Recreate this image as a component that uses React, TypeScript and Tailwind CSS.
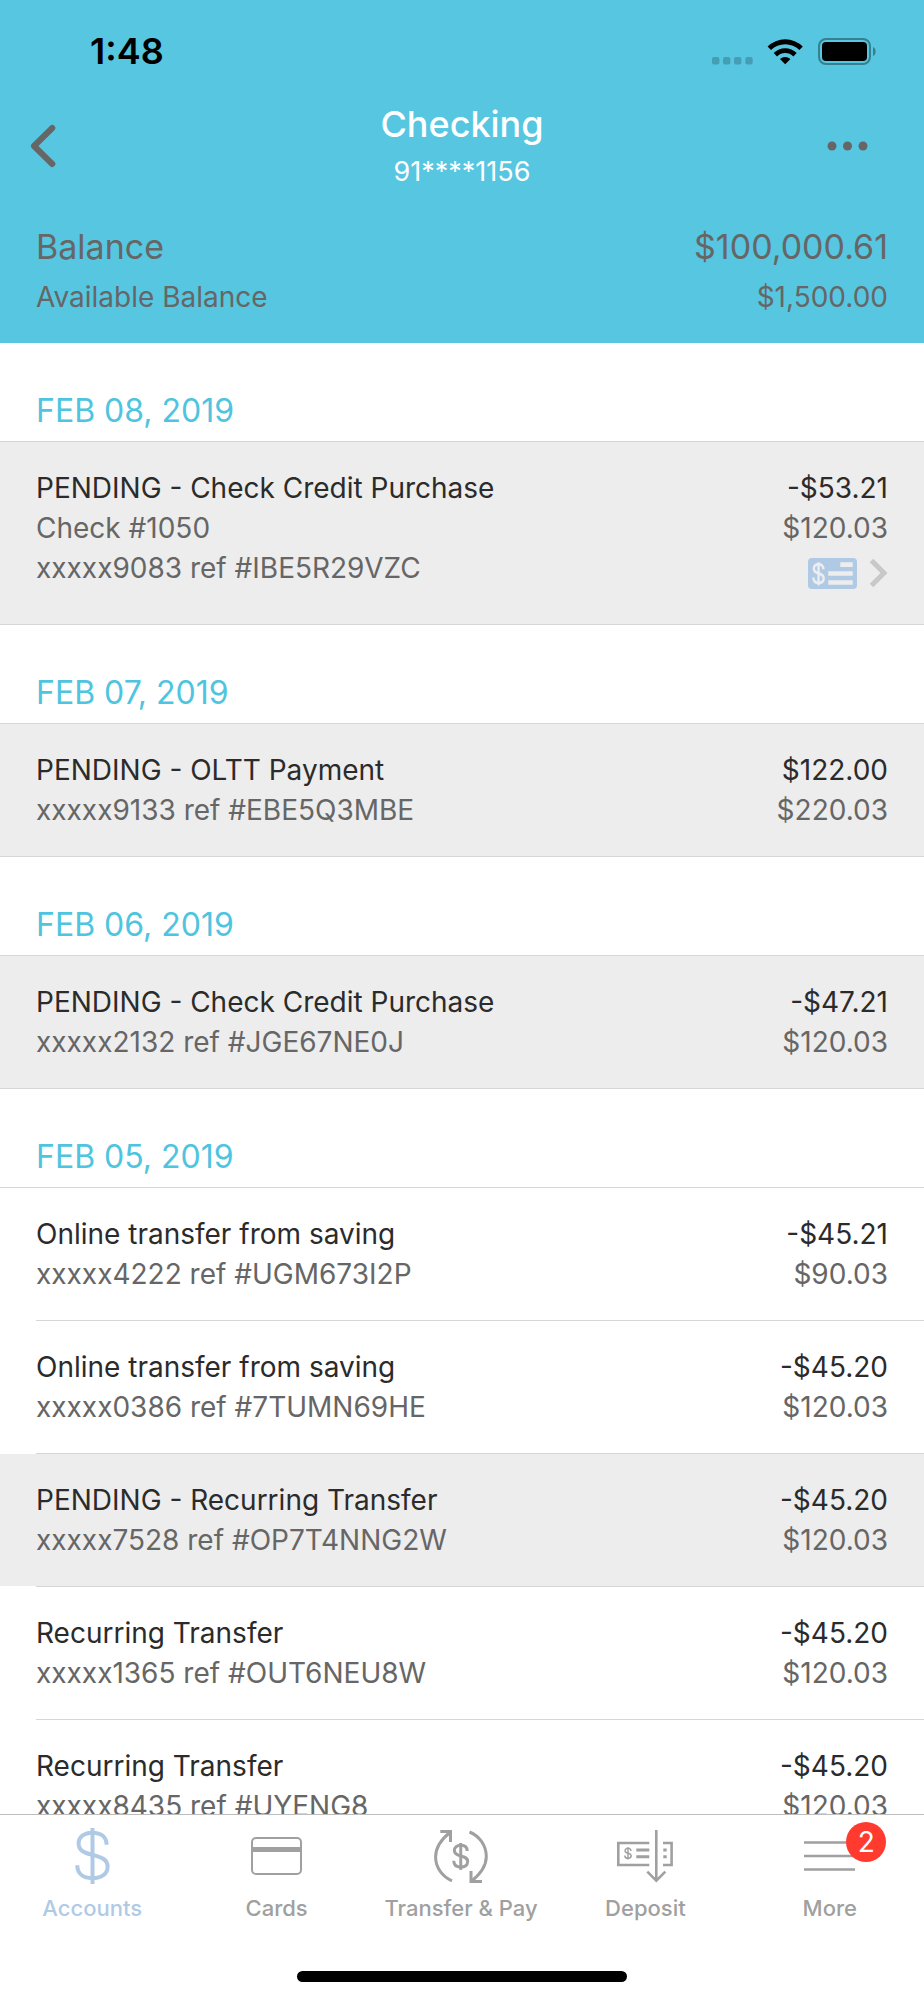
import React from 'react';
import clsx from 'clsx';

type Transaction = {
  title: string;
  details: string[];
  amount: string;
  balance: string;
  pending?: boolean;
  hasCheck?: boolean;
};

type Group = { date: string; items: Transaction[] };

const groups: Group[] = [
  {
    date: 'FEB 08, 2019',
    items: [
      {
        title: 'PENDING - Check Credit Purchase',
        details: ['Check #1050', 'xxxxx9083 ref #IBE5R29VZC'],
        amount: '-$53.21',
        balance: '$120.03',
        pending: true,
        hasCheck: true,
      },
    ],
  },
  {
    date: 'FEB 07, 2019',
    items: [
      {
        title: 'PENDING - OLTT Payment',
        details: ['xxxxx9133 ref #EBE5Q3MBE'],
        amount: '$122.00',
        balance: '$220.03',
        pending: true,
      },
    ],
  },
  {
    date: 'FEB 06, 2019',
    items: [
      {
        title: 'PENDING - Check Credit Purchase',
        details: ['xxxxx2132 ref #JGE67NE0J'],
        amount: '-$47.21',
        balance: '$120.03',
        pending: true,
      },
    ],
  },
  {
    date: 'FEB 05, 2019',
    items: [
      { title: 'Online transfer from saving', details: ['xxxxx4222 ref #UGM673I2P'], amount: '-$45.21', balance: '$90.03' },
      { title: 'Online transfer from saving', details: ['xxxxx0386 ref #7TUMN69HE'], amount: '-$45.20', balance: '$120.03' },
      {
        title: 'PENDING - Recurring Transfer',
        details: ['xxxxx7528 ref #OP7T4NNG2W'],
        amount: '-$45.20',
        balance: '$120.03',
        pending: true,
      },
      { title: 'Recurring Transfer', details: ['xxxxx1365 ref #OUT6NEU8W'], amount: '-$45.20', balance: '$120.03' },
      { title: 'Recurring Transfer', details: ['xxxxx8435 ref #UYENG8'], amount: '-$45.20', balance: '$120.03' },
    ],
  },
];

// Dollar sign on a 35x56 box, shared by all the money icons
function Dollar({ transform, width = 4 }: { transform?: string; width?: number }) {
  return (
    <g transform={transform} fill="none" stroke="currentColor" strokeWidth={width}>
      <path d="M17.5 0v56" />
      <path d="M31.6 16.8C31.6 9 26 4.7 17.5 4.7C9 4.7 3.6 9 3.6 15.5C3.6 22.5 9 24.7 17.5 26.9C27 29.3 32.6 31.5 32.6 38.7C32.6 46 26.5 50.2 17.5 50.2C8 50.2 2.3 45.5 2.3 37.2" />
    </g>
  );
}

function CheckIcon() {
  return (
    <svg width="49" height="31" viewBox="0 0 49 31" aria-hidden="true">
      <rect width="49" height="31" rx="4" fill="#b0cae5" />
      <g fill="#ededed">
        <path d="M32.3 4.3h12.4V9H32.3zM20.3 13.3h24.4v4.4H20.3zM20.3 22.3h24.4v4.4H20.3z" />
      </g>
      <g className="text-[#ededed]">
        <Dollar transform="translate(4.6 4.3) scale(0.34 0.41)" width={7} />
      </g>
    </svg>
  );
}

function AccountsIcon() {
  return (
    <svg width="35" height="56" viewBox="0 0 35 56" aria-hidden="true">
      <Dollar />
    </svg>
  );
}

function CardsIcon() {
  return (
    <svg width="51" height="38" viewBox="0 0 51 38" fill="none" stroke="currentColor" aria-hidden="true">
      <rect x="1" y="1" width="49" height="36" rx="4" strokeWidth="2" />
      <path d="M1 12.6h49" strokeWidth="5" />
    </svg>
  );
}

function TransferIcon() {
  return (
    <svg width="54" height="53" viewBox="0 0 54 53" fill="none" stroke="currentColor" strokeWidth="3" aria-hidden="true">
      <path d="M18 50.8C8.5 46.8 1.6 37.7 1.6 27C1.6 16.3 8 8.6 16.5 2" />
      <path d="M6.3 1.5h10.2V12" />
      <path d="M35.5 2C45.5 6 52.3 15.6 52.3 26.5C52.3 37.2 46 44.5 37 51.5" />
      <path d="M37 41v10.5h11" />
      <Dollar transform="translate(18.7 13) scale(0.46 0.48)" width={6.5} />
    </svg>
  );
}

function DepositIcon() {
  return (
    <svg width="56" height="53" viewBox="0 0 56 53" fill="none" stroke="currentColor" strokeWidth="2.6" aria-hidden="true">
      <path d="M32.3 13H1.3v22h31" />
      <path d="M46 13h8.6v22H46" />
      <path d="M19.3 20h13M19.3 26.7h13M46.3 20h3.4M46.3 26.7h3.4" strokeWidth="3" />
      <path d="M39.3 0v50" />
      <path d="M30.3 41.6l9 9l9-9" />
      <Dollar transform="translate(7.3 17.3) scale(0.21 0.22)" width={7} />
    </svg>
  );
}

function MoreIcon() {
  return (
    <svg width="51" height="30" viewBox="0 0 51 30" stroke="currentColor" strokeWidth="2.6" aria-hidden="true">
      <path d="M0 1.5h51M0 15h51M0 28.5h51" />
    </svg>
  );
}

const tabs = [
  { name: 'Accounts', icon: <AccountsIcon />, current: true },
  { name: 'Cards', icon: <CardsIcon /> },
  { name: 'Transfer & Pay', icon: <TransferIcon /> },
  { name: 'Deposit', icon: <DepositIcon /> },
  { name: 'More', icon: <MoreIcon />, badge: 2 },
];

function StatusBar() {
  return (
    <div className="flex h-[100px] items-start justify-between pt-[27px] pr-12 pl-[90px] text-black">
      <span className="text-[36px] leading-[48px] font-semibold">1:48</span>
      <div className="flex h-12 items-center">
        <svg width="164" height="27" viewBox="0 0 164 27" aria-hidden="true">
          <g fill="#459fb4">
            <rect x="0" y="19" width="7.4" height="7.4" rx="2" />
            <rect x="11" y="19" width="7.4" height="7.4" rx="2" />
            <rect x="22" y="19" width="7.4" height="7.4" rx="2" />
            <rect x="33.3" y="19" width="7.4" height="7.4" rx="2" />
          </g>
          <path d="M73.2 26.2l-5.2-5.1c2.8-2.9 7.6-2.9 10.4 0zM61.7 15a16.4 16.4 0 0 1 23 0l-3.3 3.4a11.6 11.6 0 0 0-16.4 0zM55.6 8.6a25 25 0 0 1 35.2 0l-3.4 3.5a20.2 20.2 0 0 0-28.4 0z" />
          <rect x="107" y="1" width="51" height="25" rx="7" fill="none" stroke="#37808f" strokeWidth="2" />
          <rect x="110" y="4" width="45" height="19" rx="4" />
          <path d="M161 9c3.5 1.3 3.5 7.7 0 9z" fill="#37808f" />
        </svg>
      </div>
    </div>
  );
}

function Header() {
  return (
    <header className="shrink-0 bg-[#56c6e1] pb-[26px] text-[#666666]">
      <StatusBar />
      <div className="grid grid-cols-[1fr_auto_1fr] items-center">
        <button type="button" aria-label="Back" className="justify-self-start pl-[30px]">
          <svg width="26" height="44" viewBox="0 0 26 44" fill="none" stroke="currentColor" strokeWidth="6" strokeLinecap="round" strokeLinejoin="round">
            <path d="M22.3 4L4 22L22.3 40" />
          </svg>
        </button>
        <div className="text-center text-white">
          <h1 className="text-[36px] leading-[48px] font-medium">Checking</h1>
          <p className="mt-1 text-[27px] leading-[40px]">91****1156</p>
        </div>
        <button type="button" aria-label="Options" className="justify-self-end pr-14">
          <svg width="41" height="10" viewBox="0 0 41 10" fill="currentColor">
            <circle cx="5" cy="5" r="4.5" />
            <circle cx="20.5" cy="5" r="4.5" />
            <circle cx="36" cy="5" r="4.5" />
          </svg>
        </button>
      </div>
      <dl className="mt-[31px] px-9">
        <div className="flex justify-between text-[34px] leading-[48px]">
          <dt>Balance</dt>
          <dd>$100,000.61</dd>
        </div>
        <div className="mt-[6px] flex justify-between text-[28px] leading-[40px]">
          <dt>Available Balance</dt>
          <dd>$1,500.00</dd>
        </div>
      </dl>
    </header>
  );
}

function TransactionRow({ item }: { item: Transaction }) {
  return (
    <div className="flex justify-between px-9 py-[26px] text-[28px] leading-[40px] text-[#666666]">
      <div>
        <p className="text-[#2b2b2b]">{item.title}</p>
        {item.details.map((line) => (
          <p key={line}>{line}</p>
        ))}
      </div>
      <div className="text-right">
        <p className="text-[#2b2b2b]">{item.amount}</p>
        <p>{item.balance}</p>
        {item.hasCheck && (
          <a href="#check" aria-label="View check" className="flex h-[50px] items-center justify-end gap-3">
            <CheckIcon />
            <svg width="19" height="30" viewBox="0 0 19 30" fill="none" stroke="#c8c8c8" strokeWidth="5" aria-hidden="true">
              <path d="M2.5 2.5L15 15L2.5 27.5" />
            </svg>
          </a>
        )}
      </div>
    </div>
  );
}

function TransactionGroup({ group }: { group: Group }) {
  return (
    <section>
      <h2 className="px-9 pt-12 pb-[10px] text-[32px] leading-[40px] text-[#4fc4df]">{group.date}</h2>
      <ul className="border-t border-[#d6d6d6]">
        {group.items.map((item, i) => (
          <li key={i} className={clsx(item.pending && 'bg-[#ededed]')}>
            <TransactionRow item={item} />
            {/* the line is inset between rows and full width under the last one */}
            <div className={clsx('bg-white', i < group.items.length - 1 && 'pl-9')}>
              <div className="h-px bg-[#d6d6d6]" />
            </div>
          </li>
        ))}
      </ul>
    </section>
  );
}

function TabBar() {
  return (
    <nav className="shrink-0 border-t border-[#bdbdbd] bg-white pb-[18px]">
      <ul className="grid grid-cols-5 pr-0.5">
        {tabs.map((tab) => (
          <li key={tab.name}>
            <a
              href="#tab"
              aria-current={tab.current ? 'page' : undefined}
              className={clsx('flex flex-col items-center pt-[11px]', tab.current ? 'text-[#b0cae5]' : 'text-[#a0a0a0]')}
            >
              <span className="relative flex h-[60px] items-center">
                {tab.icon}
                {tab.badge && (
                  <span className="absolute -top-1 left-[42px] flex size-10 items-center justify-center rounded-full bg-[#ff3b30] text-[28px] leading-none text-white">
                    {tab.badge}
                  </span>
                )}
              </span>
              <span className="mt-[6px] text-[22px] leading-[32px] font-medium">{tab.name}</span>
            </a>
          </li>
        ))}
      </ul>
      <div className="mx-auto mt-[47px] h-[11px] w-[330px] rounded-full bg-black" />
    </nav>
  );
}

export default function App() {
  return (
    <div className="flex h-screen flex-col bg-white font-['Inter',sans-serif]">
      <Header />
      <main className="min-h-0 flex-1 overflow-hidden">
        {groups.map((group) => (
          <TransactionGroup key={group.date} group={group} />
        ))}
      </main>
      <TabBar />
    </div>
  );
}
